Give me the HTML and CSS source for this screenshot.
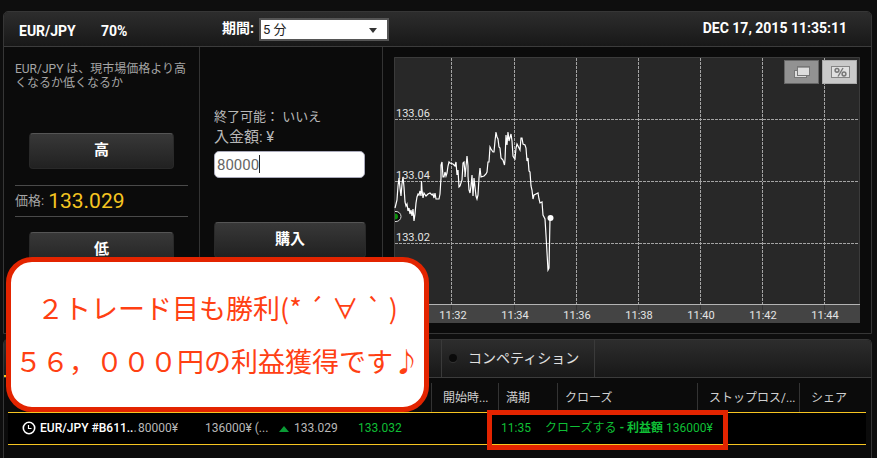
FILE: index.html
```html
<!DOCTYPE html>
<html lang="ja">
<head>
<meta charset="utf-8">
<meta name="viewport" content="width=device-width, initial-scale=1">
<title>EUR/JPY</title>
<link rel="stylesheet" href="styles.css">
</head>
<body>
<main class="page">
  <section class="panel trade">
    <header class="bar trade-head">
      <h1 class="pair">EUR/JPY</h1>
      <span class="rate">70%</span>
      <label class="period-label" for="period">期間:</label>
      <span class="select-wrap">
        <select id="period" class="period"><option>5 分</option></select>
      </span>
      <time class="clock">DEC 17, 2015 11:35:11</time>
    </header>
    <div class="trade-body">
      <div class="direction">
        <p class="question">EUR/JPY は、現市場価格より高くなるか低くなるか</p>
        <button class="btn" type="button">高</button>
        <p class="price"><span class="price-label">価格:</span> <strong class="price-value">133.029</strong></p>
        <button class="btn" type="button">低</button>
      </div>
      <div class="order">
        <p class="info">終了可能： いいえ</p>
        <label class="amount-label" for="amount">入金額: ¥</label>
        <div class="amount-wrap">
          <input id="amount" class="amount" type="text" value="80000">
          <span class="caret"></span>
        </div>
        <button class="btn buy" type="button">購入</button>
      </div>
      <div class="chart">
        <svg class="chart-svg" viewBox="394 57 466 266">
          <rect x="394" y="57" width="466" height="266" fill="#282828"/>
          <rect x="394" y="305" width="466" height="18" fill="#444"/>
          <path d="M394.500 305V57.500H859.500V305" fill="none" stroke="#3b3b3b"/>
          <path d="M451.500 58V304M514.500 58V304M576.500 58V304M638.500 58V304M700.500 58V304M762.500 58V304M824.500 58V304M395 119.500H859M395 181.500H859M395 243.500H859" stroke="#a4a4a4" stroke-dasharray="3 1" fill="none"/>
          <path d="M394 304.500H860" stroke="#b4b4b4"/>
          <path d="M451.500 305v5M514.500 305v5M576.500 305v5M638.500 305v5M700.500 305v5M762.500 305v5M824.500 305v5" stroke="#333"/>
          <path class="series" d="M395 208L397 200L398 186L399 178L400 188L401 196L402 184L403 177L404 187L405 202L406 206L407 204L408 211L409 208L410 214L411 210L412 216L413 209L414 221L415 214L416 203L417 197L418 194L419 195L420 191L421 196L421.500 181L422 190L423 198L424 193L426 196L428 194L430 193L432 195L433 194L434 198L435 193L436 199L439 199L440 194L441 178L441 165L442 162L443 177L444 177L445 172L446 176L447 173L448 166L449 162L450 163L453 164L455 166L456 162L457 175L458 170L459 187L460 186L462 180L463 163L464 162L465 173L465 177L467 156L468 166L468 176L469 190L470 193L471 186L472 175L473 196L474 178L476 196L477 199L478 195L479 178L480 168L481 177L484 176L486 174L487 172L488 162L489 162L490 147L491 149L493 152L494 152L495 141L496 132L497 137L498 139L499 147L500 148L501 158L502 159L503 160L504.500 165L505 160L506 135L507 145L508 132L509 141L511 134L512 141L513 156L514 158L515 159L516 148L517 144L518 146L520 150L521 138L522 138L523 144L525 145L526 148L527 161L528 158L529 171L530 172L531 186L532 190L533 199L534 195L536 194L538 193L539 199L540 203L542 202L543 215L545 219L546 235L548 270L549 268L550 219"/>
          <circle cx="550.500" cy="218" r="3" fill="#fff"/>
          <path d="M395 211.500a5 5 0 0 1 0 10z" fill="#0b0b0b"/>
          <path d="M395 211.500h1a5 5 0 0 1 0 10h-1" fill="#0b0b0b" stroke="#ddd"/>
          <path d="M395 213.500a3 3 0 0 1 0 6z" fill="#0d8f0d"/>
          <g class="axis">
            <text x="396" y="117">133.06</text><text x="396" y="179">133.04</text><text x="396" y="241">133.02</text>
            <g text-anchor="middle">
              <text x="453" y="319">11:32</text><text x="515" y="319">11:34</text><text x="577" y="319">11:36</text><text x="639" y="319">11:38</text><text x="701" y="319">11:40</text><text x="763" y="319">11:42</text><text x="825" y="319">11:44</text>
            </g>
          </g>
        </svg>
        <div class="chart-tools">
          <button class="tool" type="button" aria-label="ウィンドウ">
            <svg width="18" height="14" viewBox="0 0 18 14"><rect x="1.500" y="5.500" width="12" height="7" fill="#ddd" stroke="#777"/><rect x="4.500" y="1.500" width="12" height="9" fill="#ddd" stroke="#777"/><path d="M5 2.500h11" stroke="#999"/></svg>
          </button>
          <button class="tool tool-light" type="button" aria-label="パーセント">
            <svg width="20" height="14" viewBox="0 0 20 14"><rect x="1.500" y="1.500" width="18" height="11" fill="#e0e0e0" stroke="#858585"/><path d="M13 3L8 11.500" stroke="#777" stroke-width="1.400"/><circle cx="7" cy="5.300" r="1.900" fill="none" stroke="#777" stroke-width="1.500"/><circle cx="14" cy="9" r="1.900" fill="none" stroke="#777" stroke-width="1.500"/></svg>
          </button>
        </div>
      </div>
    </div>
  </section>

  <section class="panel positions">
    <nav class="bar tabs">
      <span class="tab-active"></span>
      <button class="tab" type="button"><span class="dot"></span>コンペティション</button>
    </nav>
    <table class="grid">
      <colgroup>
        <col class="c-name"><col class="c-sum"><col class="c-pay"><col class="c-open"><col class="c-now"><col class="c-start"><col class="c-end"><col class="c-gap"><col class="c-close"><col class="c-stop"><col class="c-share">
      </colgroup>
      <thead>
        <tr><th></th><th></th><th></th><th></th><th></th><th class="sep wide">開始時...</th><th class="sep" colspan="2">満期</th><th class="sep">クローズ</th><th class="sep wide">ストップロス/...</th><th class="sep wide">シェア</th></tr>
      </thead>
      <tbody>
        <tr>
          <td class="name"><svg class="clock-icon" width="14" height="14" viewBox="0 0 14 14"><circle cx="7" cy="7" r="5.700" fill="none" stroke="#fff" stroke-width="1.600"/><path d="M6.500 4v3.500h3" fill="none" stroke="#fff" stroke-width="1.200"/></svg>EUR/JPY #B611..<span class="fade">.</span></td>
          <td>80000¥</td>
          <td>136000¥ (...</td>
          <td><svg class="up" width="12" height="8" viewBox="0 0 12 8"><path d="M6 1L11 7H1z" fill="#0a9a35"/></svg>133.029</td>
          <td class="green">133.032</td>
          <td></td>
          <td class="green expiry">11:35</td>
          <td class="green" colspan="3">クローズする <b>- 利益額</b> 136000¥</td>
          <td></td>
        </tr>
      </tbody>
    </table>
    <div class="highlight"></div>
  </section>

  <aside class="callout">
    <p>２トレード目も勝利(*<span class="mark">´</span><span class="mark">∀</span><span class="mark">`</span>)</p>
    <p>５６，０００円の利益獲得です♪</p>
  </aside>
</main>
</body>
</html>
```
FILE: styles.css
```css
* { box-sizing: border-box; }

body {
  margin: 0;
  background: #0e0e0e;
  color: #b8b8b8;
  font-family: Roboto, "Noto Sans CJK JP", sans-serif;
  font-size: 12px;
  line-height: 16px;
}

h1, p { margin: 0; }
button, input, select { font: inherit; }

.page {
  position: relative;
  display: flex;
  flex-direction: column;
  gap: 5px;
  min-height: 100vh;
  padding: 11px 5px 0 3px;
  overflow: hidden;
}

.panel {
  border: 1px solid #363636;
  border-radius: 5px 5px 0 0;
  background: #0b0b0b;
}

.bar {
  display: flex;
  background: linear-gradient(#2d2d2d, #181818);
  border-bottom: 1px solid #3c3c3c;
  border-radius: 4px 4px 0 0;
}

.trade-head {
  height: 35px;
  align-items: center;
  padding: 0 24px 0 15px;
  color: #fff;
  font-size: 14px;
  font-weight: 700;
}

.pair { width: 82px; font-size: 14px; font-weight: 700; padding-top: 4px; }
.rate { width: 121px; padding-top: 4px; }
.period-label { width: 37px; padding-bottom: 2px; }

.select-wrap { position: relative; width: 130px; }
.select-wrap::after {
  content: "";
  position: absolute;
  right: 12px;
  top: 10px;
  border: 4px solid transparent;
  border-top: 5px solid #333;
  border-bottom: 0;
}
.period {
  display: block;
  appearance: none;
  width: 100%;
  height: 23px;
  padding: 0 2px;
  border: 2px solid #555;
  border-radius: 0;
  background: #fff;
  color: #222;
  font-size: 13px;
  font-weight: 400;
  line-height: 19px;
}
.clock { margin-left: auto; padding-bottom: 3px; }

.trade-body {
  display: grid;
  grid-template-columns: 196px 183px 1fr;
}

.direction, .order { border-right: 1px solid #333; }

.direction { padding: 15px 11px 0; }
.question { height: 71px; color: #a5a5a5; line-height: 14px; }
.direction .btn { margin: 0 auto; width: 145px; }
.price {
  display: flex;
  align-items: center;
  gap: 4px;
  height: 32px;
  margin: 16px 0 15px;
  border: solid #4a4a4a;
  border-width: 1px 0;
}
.price-label { color: #a5a5a5; font-size: 13px; }
.price-value { color: #f6c521; font-size: 21px; font-weight: 400; }

.btn {
  display: block;
  height: 36px;
  padding: 0 0 2px;
  border: 1px solid #292929;
  border-top: 1px solid #555;
  border-radius: 4px;
  background: linear-gradient(#383838, #212121);
  color: #fff;
  font-size: 15px;
  font-weight: 700;
}

.order { padding: 62px 16px 0 14px; }
.info { height: 18px; font-size: 13px; }
.amount-label { display: block; height: 24px; font-size: 15px; line-height: 20px; }
.amount-wrap { position: relative; margin-bottom: 44px; }
.amount {
  display: block;
  width: 151px;
  height: 27px;
  padding: 0 2px;
  border: 1px solid #aab;
  border-radius: 5px;
  background: #fff;
  color: #666;
  font-size: 15px;
}
.caret {
  position: absolute;
  left: 45px;
  top: 4px;
  width: 1px;
  height: 18px;
  background: #222;
}
.buy { width: 152px; }

.chart { position: relative; padding: 10px 11px; }
.chart-svg { display: block; width: 100%; height: auto; }
.series { fill: none; stroke: #fff; stroke-width: 1.2; }
.axis { fill: #e4e4e4; font-size: 11px; }
.chart-tools {
  position: absolute;
  top: 13px;
  right: 14px;
  display: flex;
  gap: 3px;
}
.tool {
  display: grid;
  place-items: center;
  width: 35px;
  height: 24px;
  padding: 0;
  border: 1px solid #666;
  background: #929292;
}
.tool-light { border-color: #aaa; background: #c9c9c9; }

.positions { position: relative; flex: 1; border-bottom: 0; }
.tabs { height: 38px; }
.tab {
  display: flex;
  align-items: center;
  gap: 11px;
  padding: 0 15px 2px 7px;
  border: solid #3a3a3a;
  border-width: 0 1px;
  background: none;
  color: #e0e0e0;
  font-size: 14px;
}
.tab-active { flex: 0 0 420px; margin-right: 17px; border-bottom: 2px solid #f6c521; }
.dot {
  width: 8px;
  height: 8px;
  border-radius: 50%;
  background: #0a0a0a;
  box-shadow: 0 1px 0 #333;
}

.grid {
  width: calc(100% - 9px);
  margin: 5px 5px 0 4px;
  border-collapse: separate;
  border-spacing: 0;
  table-layout: fixed;
}
.c-name { width: 130px; }
.c-sum { width: 67px; }
.c-pay { width: 73px; }
.c-open { width: 80px; }
.c-now { width: 73px; }
.c-start { width: 67px; }
.c-end { width: 47px; }
.c-gap { width: 12px; }
.c-close { width: 140px; }
.c-stop { width: 102px; }

th, td { padding: 0; white-space: nowrap; text-align: left; }
th { height: 29px; color: #d0d0d0; font-weight: 400; }
.sep { border-left: 1px solid #333; padding-left: 7px; }
.wide { padding-left: 11px; }
td {
  height: 33px;
  padding-bottom: 2px;
  border: solid #f6c521;
  border-width: 1px 0;
  background: #000;
}
.name { padding-left: 14px; color: #fff; font-weight: 500; }
.fade { color: #777; }
.clock-icon { margin-right: 4px; vertical-align: -3px; }
.up { margin-right: 4px; vertical-align: -1px; }
.green { color: #0fbf35; }
.expiry { padding-left: 3px; }

.highlight {
  position: absolute;
  left: 483px;
  top: 70px;
  width: 241px;
  height: 40px;
  border: 5px solid #e32400;
}

.callout {
  position: absolute;
  left: 6px;
  top: 257px;
  width: 423px;
  height: 155px;
  padding-top: 19px;
  border: 5px solid #e32400;
  border-radius: 26px;
  background: #fff;
  color: #ff4013;
  font-family: "Noto Sans CJK JP", sans-serif;
  font-size: 27px;
  font-weight: 400;
  line-height: 53px;
  text-align: center;
  white-space: nowrap;
}
.mark { display: inline-block; width: 29px; }
```
